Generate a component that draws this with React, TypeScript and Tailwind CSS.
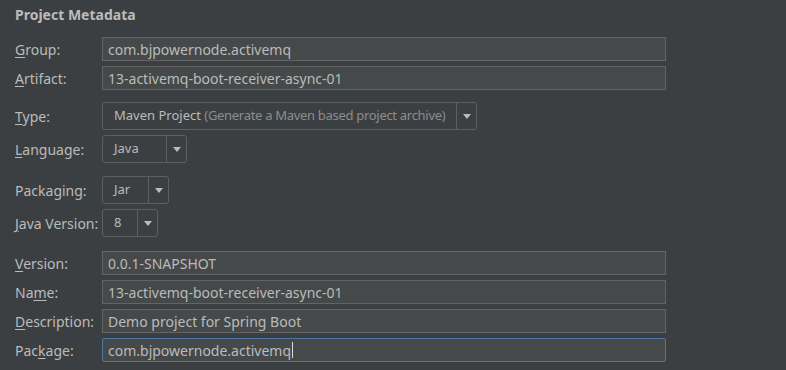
const font = { fontFamily: '"Noto Sans", "Open Sans", sans-serif' };

function Label({ pre, u, post }: { pre: string; u: string; post: string }) {
  return (
    <div className="w-[102px] shrink-0 whitespace-nowrap pl-[15px] text-[14px] text-[#bbbbbb]">
      {pre}
      <span className="underline underline-offset-2">{u}</span>
      {post}
    </div>
  );
}

function Field({ value, focused }: { value: string; focused?: boolean }) {
  return (
    <div
      className={
        focused
          ? "flex h-[24px] w-[564px] shrink-0 items-center whitespace-nowrap rounded-[2px] border border-[#4a76a3] bg-[#45494a] px-[5px] text-[14px] text-[#bbbbbb]"
          : "flex h-[24px] w-[564px] shrink-0 items-center whitespace-nowrap border border-[#646464] bg-[#45494a] px-[5px] text-[14px] text-[#bbbbbb]"
      }
    >
      {value}
      {focused && <span className="ml-px h-[16px] w-px bg-[#dddddd]" />}
    </div>
  );
}

function Combo({ width, children }: { width: string; children: React.ReactNode }) {
  return (
    <div className={`flex h-[28px] shrink-0 items-stretch rounded-[3px] border border-[#5e6060] text-[13px] ${width}`}>
      <div className="flex min-w-0 flex-1 items-center overflow-hidden whitespace-nowrap px-[11px] text-[#bbbbbb]">{children}</div>
      <div className="flex w-[20px] shrink-0 items-center justify-center border-l border-[#5e6060]">
        <svg width="8" height="5" viewBox="0 0 8 5">
          <path d="M0 0h8L4 5z" fill="#bbbbbb" />
        </svg>
      </div>
    </div>
  );
}

export default function App() {
  return (
    <div className="h-[370px] w-[786px] overflow-hidden bg-[#3c3f41]" style={font}>
      <div className="pl-[15px] pt-[5px] text-[14px] font-bold leading-[20px] text-[#bbbbbb]">
        Project Metadata
      </div>

      <div className="mt-[12px] flex flex-col gap-[5px]">
        <div className="flex items-center">
          <Label pre="" u="G" post="roup:" />
          <Field value="com.bjpowernode.activemq" />
        </div>
        <div className="flex items-center">
          <Label pre="" u="A" post="rtifact:" />
          <Field value="13-activemq-boot-receiver-async-01" />
        </div>
      </div>

      <div className="mt-[12px] flex flex-col gap-[5px]">
        <div className="flex items-center">
          <Label pre="" u="T" post="ype:" />
          <Combo width="w-[375px]">
            Maven Project&nbsp;
            <span className="tracking-[-0.3px] text-[#8d8d8d]">(Generate a Maven based project archive)</span>
          </Combo>
        </div>
        <div className="flex items-center">
          <Label pre="" u="L" post="anguage:" />
          <Combo width="w-[85px]">Java</Combo>
        </div>
      </div>

      <div className="mt-[13px] flex flex-col gap-[5px]">
        <div className="flex items-center">
          <Label pre="Packa" u="g" post="ing:" />
          <Combo width="w-[67px]">Jar</Combo>
        </div>
        <div className="flex items-center">
          <Label pre="" u="J" post="ava Version:" />
          <Combo width="w-[56px]">8</Combo>
        </div>
      </div>

      <div className="mt-[14px] flex flex-col gap-[5px]">
        <div className="flex items-center">
          <Label pre="" u="V" post="ersion:" />
          <Field value="0.0.1-SNAPSHOT" />
        </div>
        <div className="flex items-center">
          <Label pre="Na" u="m" post="e:" />
          <Field value="13-activemq-boot-receiver-async-01" />
        </div>
        <div className="flex items-center">
          <Label pre="" u="D" post="escription:" />
          <Field value="Demo project for Spring Boot" />
        </div>
        <div className="flex items-center">
          <Label pre="Pac" u="k" post="age:" />
          <Field value="com.bjpowernode.activemq" focused />
        </div>
      </div>
    </div>
  );
}
